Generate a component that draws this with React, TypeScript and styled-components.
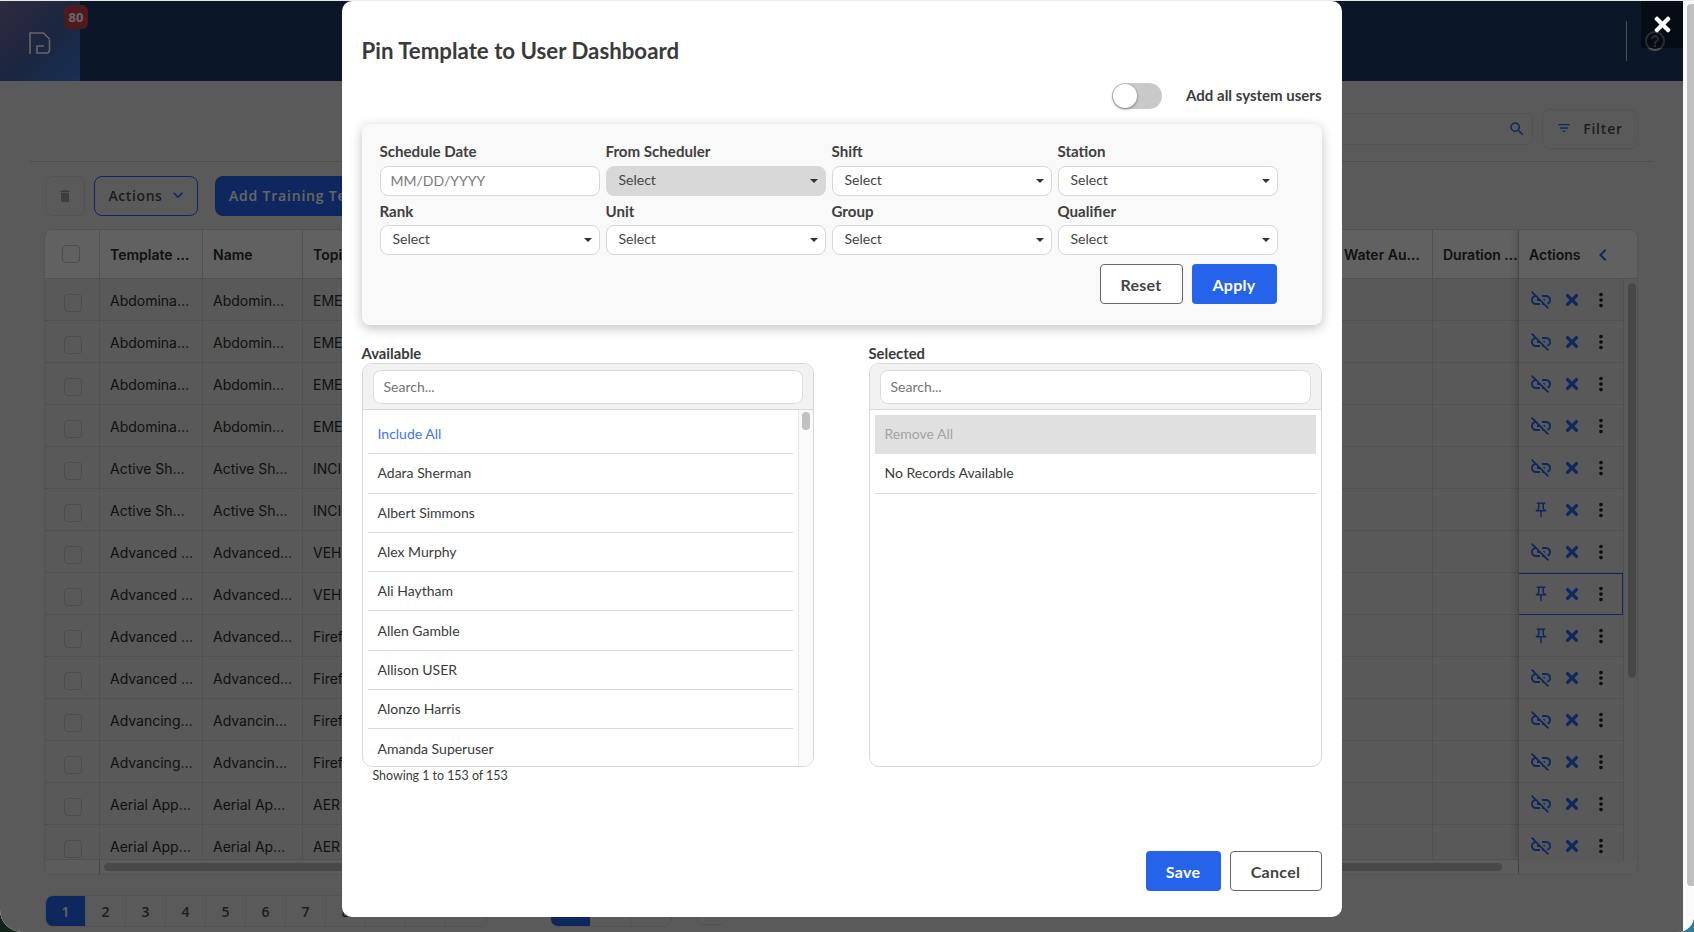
import React from "react";
import styled, { createGlobalStyle } from "styled-components";
import { MdLinkOff, MdOutlinePushPin, MdMoreVert, MdKeyboardArrowDown, MdSearch, MdFilterList, MdDelete, MdHelpOutline, MdChevronLeft } from "react-icons/md";
import { FaTimes } from "react-icons/fa";

const BLUE = "#2563eb";

const Global = createGlobalStyle`
  * { box-sizing: border-box; }
  html, body { margin: 0; padding: 0; overflow: hidden; }
  body { font-family: "Lato", "Liberation Sans", sans-serif; }
`;

const Stage = styled.div`
  position: relative;
  width: 1694px;
  height: 932px;
  overflow: hidden;
  background: linear-gradient(90deg, #13231a 0 50%, #2c7c9c 50% 100%);
`;
const Win = styled.div`
  position: relative;
  display: flex;
  height: 932px;
  padding-top: 1px;
  overflow: hidden;
  background: #e8e8e8;
  border-radius: 0 0 16px 22px;
`;
const Main = styled.div`
  width: 1683px;
  height: 931px;
  background: #e2e2e2;
  display: flex;
  flex-direction: column;
  font-family: "Open Sans", sans-serif;
`;
const Rail = styled.div`
  width: 11px;
  background: #fafafa;
  padding: 3px 0 0 4px;
`;
const RailThumb = styled.div`
  width: 7px;
  height: 882px;
  background: #c0c0c0;
  border-radius: 4px 0 0 4px;
`;

const TopBar = styled.header`
  height: 80px;
  flex: none;
  display: flex;
  align-items: center;
  padding-right: 18px;
  background: #1d3967;
`;
const LogoBox = styled.div`
  position: relative;
  width: 80px;
  height: 80px;
  display: flex;
  align-items: center;
  justify-content: center;
  background: linear-gradient(135deg, #75699f 0%, #41609f 55%, #3f76d8 100%);
`;
const LogoMark = styled.svg`
  width: 22px;
  height: 22px;
  margin-top: 4px;
`;
const Badge = styled.span`
  position: absolute;
  left: 64px;
  top: 4px;
  width: 24px;
  height: 24px;
  border-radius: 6px;
  background: #c8404a;
  color: #fff;
  font: 700 13px "Open Sans", sans-serif;
  display: flex;
  align-items: center;
  justify-content: center;
`;
const TopSpacer = styled.div`
  flex: 1;
`;
const TopDivider = styled.div`
  width: 1px;
  height: 40px;
  background: #c8c8c8;
  margin-right: 16px;
`;
const Help = styled(MdHelpOutline)`
  font-size: 24px;
  color: #c8c8c8;
  margin-right: -2px;
`;

const Page = styled.div`
  flex: 1;
  padding: 0 45px 0 44px;
  display: flex;
  flex-direction: column;
`;
const FilterBar = styled.div`
  height: 81px;
  flex: none;
  margin: 0 -15px 0 -14px;
  padding: 28px 15px 0 0;
  display: flex;
  justify-content: flex-end;
  align-items: flex-start;
  gap: 9px;
  border-bottom: 1px solid #c4c4c4;
`;
const SearchBox = styled.div`
  width: 360px;
  height: 32px;
  margin-top: 4px;
  border: 1px solid #cfcfcf;
  border-radius: 6px;
  display: flex;
  align-items: center;
  justify-content: flex-end;
  padding-right: 6px;
  color: ${BLUE};
  font-size: 18px;
`;
const FilterBtn = styled.button`
  width: 96px;
  height: 40px;
  padding: 0 0 2px 1px;
  border: 1px solid #cfcfcf;
  border-radius: 8px;
  background: transparent;
  display: flex;
  align-items: center;
  justify-content: center;
  gap: 11px;
  font: 600 14px "Open Sans", sans-serif;
  letter-spacing: 0.8px;
  color: #4a4a4a;
  svg { color: ${BLUE}; font-size: 16px; margin-left: -2px; }
`;
const ActionBar = styled.div`
  margin: 14px 0 0 1px;
  height: 40px;
  display: flex;
  flex: none;
  gap: 9px;
`;
const SquareBtn = styled.button`
  width: 40px;
  height: 40px;
  border: 1px solid #cfcfcf;
  border-radius: 8px;
  background: transparent;
  display: flex;
  align-items: center;
  justify-content: center;
  color: #9a9a9a;
  font-size: 16px;
  padding: 0;
`;
const OutlineBtn = styled.button`
  width: 104px;
  height: 40px;
  padding: 0 0 2px 4px;
  border: 1px solid ${BLUE};
  border-radius: 8px;
  background: transparent;
  display: flex;
  align-items: center;
  justify-content: center;
  gap: 5px;
  font: 600 14px "Open Sans", sans-serif;
  letter-spacing: 0.6px;
  color: #4a4a4a;
  svg { color: ${BLUE}; font-size: 20px; }
`;
const FillBtn = styled.button`
  margin-left: 8px;
  width: 210px;
  height: 40px;
  padding: 0 0 2px 14px;
  border: 0;
  border-radius: 8px;
  background: ${BLUE};
  color: #fff;
  font: 600 14px "Open Sans", sans-serif;
  letter-spacing: 0.8px;
  text-align: left;
`;

const TableBox = styled.div`
  margin-top: 13px;
  height: 646px;
  flex: none;
  border: 1px solid #cfcfcf;
  border-radius: 8px;
  background: #e6e6e6;
  display: flex;
  flex-direction: column;
  overflow: hidden;
  font-family: "Inter", "Liberation Sans", sans-serif;
`;
const TableTop = styled.div`
  flex: 1;
  display: flex;
  min-height: 0;
`;
const Scroller = styled.div`
  flex: 1;
  min-width: 0;
  overflow: hidden;
`;
const GridRow = styled.div<{ $head?: boolean }>`
  display: grid;
  grid-template-columns: 55px 103px 100px 1fr 99px 86px;
  height: ${(p) => (p.$head ? "49px" : "42px")};
  background: ${(p) => (p.$head ? "#f2f2f2" : "#dedede")};
  border-bottom: 1px solid #c8c8c8;
`;
const Cell = styled.div<{ $head?: boolean }>`
  border-right: 1px solid #cacaca;
  padding: ${(p) => (p.$head ? "1px 0 0 10px" : "2px 0 0 10px")};
  display: flex;
  align-items: center;
  min-width: 0;
  white-space: nowrap;
  overflow: hidden;
  font-size: 14px;
  font-weight: ${(p) => (p.$head ? 600 : 400)};
  color: #2c2c2c;
`;
const CheckCell = styled(Cell)`
  justify-content: center;
  padding: 0;
`;
const Check = styled.div<{ $head?: boolean }>`
  width: 18px;
  height: 18px;
  border: 1px solid #bdbdbd;
  border-radius: 4px;
  margin: ${(p) => (p.$head ? "0 2px 0 0" : "6px 0 0 2px")};
`;
const ActionsPane = styled.div`
  width: 118px;
  flex: none;
  box-shadow: -4px 0 6px rgba(0, 0, 0, 0.14);
  position: relative;
`;
const ActionsHead = styled.div`
  height: 49px;
  padding: 1px 0 0 10px;
  display: flex;
  align-items: center;
  gap: 10px;
  background: #f2f2f2;
  border-bottom: 1px solid #c8c8c8;
  font-size: 14px;
  font-weight: 600;
  color: #2c2c2c;
  svg { color: ${BLUE}; font-size: 24px; }
`;
const ActionsBody = styled.div`
  display: flex;
`;
const ActionRows = styled.div`
  width: 104px;
  height: 582px;
  overflow: hidden;
`;
const ActionRow = styled.div<{ $selected?: boolean }>`
  height: 42px;
  display: grid;
  grid-template-columns: 34px 27px 32px;
  padding-left: 5px;
  align-items: center;
  justify-items: center;
  background: #dedede;
  border-style: solid;
  border-width: ${(p) => (p.$selected ? "1px 1px 1px 0" : "0 0 1px 0")};
  border-color: ${(p) => (p.$selected ? BLUE : "#c8c8c8")};
  color: ${BLUE};
  .dots { color: #222; font-size: 22px; }
`;
const VTrack = styled.div`
  flex: 1;
  padding: 4px 0 0 4px;
  background: #e2e2e2;
  border-left: 1px solid #cacaca;
`;
const VThumb = styled.div`
  width: 8px;
  height: 395px;
  border-radius: 4px;
  background: #b4b4b4;
`;
const TableFoot = styled.div`
  height: 15px;
  flex: none;
  display: flex;
  border-top: 1px solid #cacaca;
`;
const FootLeft = styled.div`
  width: 55px;
  border-right: 1px solid #a8a8a8;
`;
const FootMiddle = styled.div`
  flex: 1;
  padding: 3px 0 0 4px;
  border-right: 1px solid #a8a8a8;
`;
const HThumb = styled.div`
  width: 1398px;
  height: 8px;
  border-radius: 4px;
  background: #b4b4b4;
`;
const FootRight = styled.div`
  width: 118px;
`;
const PagerRow = styled.div`
  margin: 20px 0 0 1px;
  display: flex;
  align-items: flex-start;
`;
const Pager = styled.div`
  display: flex;
  height: 32px;
  border: 1px solid #cfcfcf;
  border-radius: 8px;
  overflow: hidden;
`;
const PageCell = styled.div<{ $active?: boolean }>`
  width: 40px;
  display: flex;
  align-items: center;
  justify-content: center;
  font: 600 14px "Open Sans", sans-serif;
  color: ${(p) => (p.$active ? "#fff" : "#4a4a4a")};
  background: ${(p) => (p.$active ? BLUE : "transparent")};
  border-right: 1px solid #cfcfcf;
`;
const PagerGap = styled.div`
  width: 63px;
`;
const PerPage = styled.div`
  margin-left: 24px;
  width: 30px;
  height: 30px;
  border: 1px solid #cfcfcf;
  border-radius: 6px;
  display: flex;
  justify-content: center;
  &::after { content: ""; width: 10px; height: 3px; background: ${BLUE}; }
`;

const Overlay = styled.div`
  position: absolute;
  left: 0;
  top: 1px;
  width: 1683px;
  bottom: 0;
  background: rgba(0, 0, 0, 0.6);
  display: flex;
  justify-content: center;
  align-items: flex-start;
`;
const CloseBox = styled.div`
  position: absolute;
  right: 0;
  top: 0;
  width: 42px;
  height: 47px;
  background: rgba(0, 0, 0, 0.45);
  color: #fff;
  display: flex;
  align-items: center;
  justify-content: center;
  font-size: 23px;
`;
const Modal = styled.div`
  width: 1000px;
  height: 916px;
  background: #fff;
  border-radius: 10px;
  padding: 0 20px;
  display: flex;
  flex-direction: column;
  color: #3c3c3c;
`;
const Title = styled.h2`
  margin: 35px 0 0;
  font-size: 22.25px;
  line-height: 30px;
  font-weight: 700;
  color: #3a3a3a;
`;
const ToggleRow = styled.div`
  margin-top: 17px;
  height: 26px;
  display: flex;
  justify-content: flex-end;
  align-items: flex-start;
  gap: 24px;
`;
const ToggleTrack = styled.div`
  width: 50px;
  height: 26px;
  border-radius: 13px;
  background: #c9c9c9;
  padding: 1px;
`;
const ToggleKnob = styled.div`
  width: 24px;
  height: 24px;
  border-radius: 50%;
  background: #fff;
  box-shadow: 0 1px 3px rgba(0, 0, 0, 0.45);
`;
const ToggleLabel = styled.span`
  font-size: 15px;
  line-height: 24px;
  font-weight: 700;
`;
const Card = styled.section`
  margin-top: 15px;
  height: 201px;
  flex: none;
  padding: 17px 44px 0 18px;
  background: #f9f9f9;
  border-radius: 8px;
  box-shadow: 0 3px 12px rgba(0, 0, 0, 0.25);
`;
const FieldGrid = styled.div`
  display: grid;
  grid-template-columns: repeat(4, 220px);
  column-gap: 6px;
  row-gap: 5px;
`;
const Field = styled.div`
  display: flex;
  flex-direction: column;
  gap: 4.5px;
`;
const FieldLabel = styled.label`
  font-size: 15.1px;
  line-height: 20px;
  font-weight: 700;
  color: #3f3f3f;
`;
const DateInput = styled.input`
  height: 30px;
  width: 100%;
  border: 1px solid #d8d8d8;
  border-radius: 8px;
  padding: 0 10px;
  font: 400 14px "Lato", sans-serif;
  background: #fff;
  &::placeholder { color: #7a7a7a; opacity: 1; }
`;
const SelectBox = styled.div<{ $disabled?: boolean }>`
  height: 30px;
  border: 1px solid #d8d8d8;
  border-radius: 8px;
  padding: 0 7px 3px 12px;
  display: flex;
  align-items: center;
  justify-content: space-between;
  font-size: 14px;
  color: #444;
  background: ${(p) => (p.$disabled ? "#d8d8d8" : "#fff")};
  &::after {
    content: "";
    margin-top: 3px;
    border-left: 4px solid transparent;
    border-right: 4px solid transparent;
    border-top: 4px solid #333;
  }
`;
const CardActions = styled.div`
  margin-top: 9px;
  display: flex;
  justify-content: flex-end;
  gap: 9px;
  padding-right: 1px;
`;
const GhostButton = styled.button<{ $w: number }>`
  width: ${(p) => p.$w}px;
  height: 40px;
  background: #fff;
  border: 1px solid #666;
  border-radius: 4px;
  font: 700 16px "Lato", sans-serif;
  letter-spacing: 0.3px;
  color: #444;
`;
const PrimaryButton = styled.button<{ $w: number }>`
  width: ${(p) => p.$w}px;
  height: 40px;
  background: ${BLUE};
  border: 0;
  border-radius: 4px;
  font: 700 16px "Lato", sans-serif;
  letter-spacing: 0.3px;
  color: #fff;
`;
const Lists = styled.div`
  margin-top: 19px;
  display: grid;
  grid-template-columns: 452px 453px;
  column-gap: 55px;
`;
const ListLabel = styled.div`
  font-size: 14.8px;
  line-height: 19px;
  font-weight: 700;
  color: #3a3a3a;
  height: 19px;
`;
const ListBox = styled.div`
  height: 404px;
  border: 1px solid #d8d8d8;
  border-radius: 10px;
  overflow: hidden;
  display: flex;
  flex-direction: column;
`;
const ListHead = styled.div`
  height: 46px;
  flex: none;
  padding: 6px 10px 0;
  background: #f2f2f2;
  border-bottom: 1px solid #d8d8d8;
`;
const ListSearch = styled.input`
  width: 100%;
  height: 34px;
  border: 1px solid #dcdcdc;
  border-radius: 8px;
  padding: 0 10px 1px;
  font: 400 14px "Lato", sans-serif;
  background: #fff;
  &::placeholder { color: #757575; opacity: 1; }
`;
const ListBody = styled.div`
  flex: 1;
  display: flex;
  min-height: 0;
`;
const ListRows = styled.div`
  flex: 1;
  overflow: hidden;
  padding: 5px 5px 0;
`;
const ListRow = styled.div<{ $include?: boolean; $muted?: boolean }>`
  height: 39.3px;
  padding: 0 10px 1px;
  display: flex;
  align-items: center;
  font-size: 14px;
  border-bottom: 1px solid ${(p) => (p.$muted ? "transparent" : "#dadada")};
  color: ${(p) => (p.$include ? "#3f74f6" : p.$muted ? "#a3a3a3" : "#3a3a3a")};
  background: ${(p) => (p.$muted ? "#e0e0e0" : "transparent")};
`;
const ListScroll = styled.div`
  width: 15px;
  flex: none;
  padding: 2px 0 0 3px;
  background: #f9f9f9;
  border-left: 1px solid #e8e8e8;
`;
const ListThumb = styled.div`
  width: 8px;
  height: 18px;
  border-radius: 4px;
  background: #c1c1c1;
`;
const Showing = styled.div`
  margin: 0 0 0 11px;
  font-size: 12.4px;
  line-height: 18px;
  color: #3a3a3a;
`;
const ModalFoot = styled.div`
  margin-top: auto;
  padding-bottom: 26px;
  display: flex;
  justify-content: flex-end;
  gap: 9px;
`;

const rows: [string, string, string][] = [
  ["Abdomina…", "Abdomin…", "EME"],
  ["Abdomina…", "Abdomin…", "EME"],
  ["Abdomina…", "Abdomin…", "EME"],
  ["Abdomina…", "Abdomin…", "EME"],
  ["Active Sh…", "Active Sh…", "INCI"],
  ["Active Sh…", "Active Sh…", "INCI"],
  ["Advanced …", "Advanced…", "VEH"],
  ["Advanced …", "Advanced…", "VEH"],
  ["Advanced …", "Advanced…", "Firef"],
  ["Advanced …", "Advanced…", "Firef"],
  ["Advancing…", "Advancin…", "Firef"],
  ["Advancing…", "Advancin…", "Firef"],
  ["Aerial App…", "Aerial Ap…", "AER"],
  ["Aerial App…", "Aerial Ap…", "AER"],
];
const pinned = new Set([5, 7, 8]);
const names = ["Adara Sherman", "Albert Simmons", "Alex Murphy", "Ali Haytham", "Allen Gamble", "Allison USER", "Alonzo Harris", "Amanda Superuser"];
const fields1 = ["From Scheduler", "Shift", "Station"];
const fields2 = ["Rank", "Unit", "Group", "Qualifier"];

export default function App() {
  return (
    <Stage>
      <Global />
      <Win>
        <Main>
          <TopBar>
            <LogoBox>
              <LogoMark viewBox="0 0 22 22" fill="none" stroke="#fff" strokeWidth="1.6">
                <path d="M1 22V1h13.5l6 6" />
                <path d="M20.5 7.5V18c0 2-1 3-3 3H8v-7h7" />
              </LogoMark>
              <Badge>80</Badge>
            </LogoBox>
            <TopSpacer />
            <TopDivider />
            <Help />
          </TopBar>
          <Page>
            <FilterBar>
              <SearchBox><MdSearch /></SearchBox>
              <FilterBtn><MdFilterList />Filter</FilterBtn>
            </FilterBar>
            <ActionBar>
              <SquareBtn><MdDelete /></SquareBtn>
              <OutlineBtn>Actions<MdKeyboardArrowDown /></OutlineBtn>
              <FillBtn>Add Training Template</FillBtn>
            </ActionBar>
            <TableBox>
              <TableTop>
                <Scroller>
                  <GridRow $head>
                    <CheckCell $head><Check $head /></CheckCell>
                    <Cell $head>Template …</Cell>
                    <Cell $head>Name</Cell>
                    <Cell $head>Topic</Cell>
                    <Cell $head>Water Au…</Cell>
                    <Cell $head>Duration …</Cell>
                  </GridRow>
                  {rows.map((r, i) => (
                    <GridRow key={i}>
                      <CheckCell><Check /></CheckCell>
                      <Cell>{r[0]}</Cell>
                      <Cell>{r[1]}</Cell>
                      <Cell>{r[2]}</Cell>
                      <Cell />
                      <Cell />
                    </GridRow>
                  ))}
                </Scroller>
                <ActionsPane>
                  <ActionsHead>Actions<MdChevronLeft /></ActionsHead>
                  <ActionsBody>
                    <ActionRows>
                      {rows.map((_, i) => (
                        <ActionRow key={i} $selected={i === 7}>
                          {pinned.has(i) ? <MdOutlinePushPin size={18} /> : <MdLinkOff size={24} />}
                          <FaTimes size={18} />
                          <MdMoreVert className="dots" />
                        </ActionRow>
                      ))}
                    </ActionRows>
                    <VTrack><VThumb /></VTrack>
                  </ActionsBody>
                </ActionsPane>
              </TableTop>
              <TableFoot>
                <FootLeft />
                <FootMiddle><HThumb /></FootMiddle>
                <FootRight />
              </TableFoot>
            </TableBox>
            <PagerRow>
              <Pager>
                {Array.from({ length: 11 }, (_, i) => (
                  <PageCell key={i} $active={i === 0}>{i + 1}</PageCell>
                ))}
              </Pager>
              <PagerGap />
              <Pager>
                <PageCell $active />
                <PageCell />
                <PageCell />
              </Pager>
              <PerPage />
            </PagerRow>
          </Page>
        </Main>
        <Rail><RailThumb /></Rail>
        <Overlay>
          <Modal>
            <Title>Pin Template to User Dashboard</Title>
            <ToggleRow>
              <ToggleTrack><ToggleKnob /></ToggleTrack>
              <ToggleLabel>Add all system users</ToggleLabel>
            </ToggleRow>
            <Card>
              <FieldGrid>
                <Field>
                  <FieldLabel>Schedule Date</FieldLabel>
                  <DateInput placeholder="MM/DD/YYYY" />
                </Field>
                {fields1.map((f, i) => (
                  <Field key={f}>
                    <FieldLabel>{f}</FieldLabel>
                    <SelectBox $disabled={i === 0}>Select</SelectBox>
                  </Field>
                ))}
                {fields2.map((f) => (
                  <Field key={f}>
                    <FieldLabel>{f}</FieldLabel>
                    <SelectBox>Select</SelectBox>
                  </Field>
                ))}
              </FieldGrid>
              <CardActions>
                <GhostButton $w={83}>Reset</GhostButton>
                <PrimaryButton $w={85}>Apply</PrimaryButton>
              </CardActions>
            </Card>
            <Lists>
              <div>
                <ListLabel>Available</ListLabel>
                <ListBox>
                  <ListHead><ListSearch placeholder="Search..." /></ListHead>
                  <ListBody>
                    <ListRows>
                      <ListRow $include>Include All</ListRow>
                      {names.map((n) => <ListRow key={n}>{n}</ListRow>)}
                    </ListRows>
                    <ListScroll><ListThumb /></ListScroll>
                  </ListBody>
                </ListBox>
                <Showing>Showing 1 to 153 of 153</Showing>
              </div>
              <div>
                <ListLabel>Selected</ListLabel>
                <ListBox>
                  <ListHead><ListSearch placeholder="Search..." /></ListHead>
                  <ListBody>
                    <ListRows>
                      <ListRow $muted>Remove All</ListRow>
                      <ListRow>No Records Available</ListRow>
                    </ListRows>
                  </ListBody>
                </ListBox>
              </div>
            </Lists>
            <ModalFoot>
              <PrimaryButton $w={75}>Save</PrimaryButton>
              <GhostButton $w={92}>Cancel</GhostButton>
            </ModalFoot>
          </Modal>
          <CloseBox><FaTimes /></CloseBox>
        </Overlay>
      </Win>
    </Stage>
  );
}
